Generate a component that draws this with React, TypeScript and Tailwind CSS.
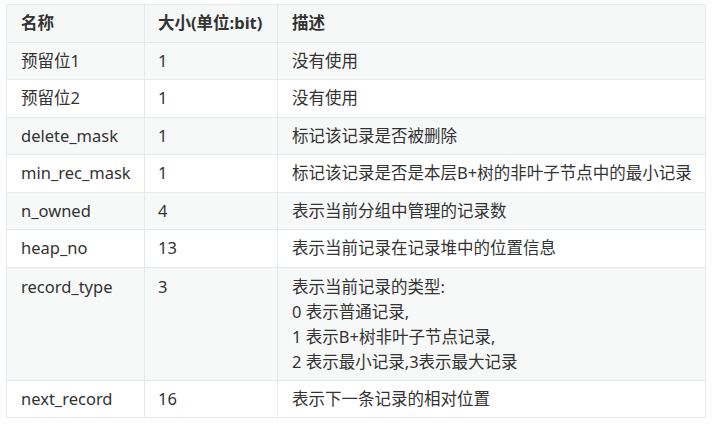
import React from "react";

const rows: [string, string, string[]][] = [
  ["预留位1", "1", ["没有使用"]],
  ["预留位2", "1", ["没有使用"]],
  ["delete_mask", "1", ["标记该记录是否被删除"]],
  ["min_rec_mask", "1", ["标记该记录是否是本层B+树的非叶子节点中的最小记录"]],
  ["n_owned", "4", ["表示当前分组中管理的记录数"]],
  ["heap_no", "13", ["表示当前记录在记录堆中的位置信息"]],
  [
    "record_type",
    "3",
    ["表示当前记录的类型:", "0 表示普通记录,", "1 表示B+树非叶子节点记录,", "2 表示最小记录,3表示最大记录"],
  ],
  ["next_record", "16", ["表示下一条记录的相对位置"]],
];

function Line({ children, multi }: { children: React.ReactNode; multi?: boolean }) {
  return (
    <div className={multi ? "h-[25px] leading-[25px] whitespace-nowrap" : "h-[24.5px] leading-[24.5px] whitespace-nowrap"}>
      {children}
    </div>
  );
}

export default function App() {
  return (
    <div
      className="w-[713px] h-[424px] bg-white pl-[6px] pt-[4px] text-[16.5px] text-[#333333]"
      style={{ fontFamily: '"Noto Sans", "Noto Sans CJK SC", sans-serif' }}
    >
      <table className="border-collapse w-[700px] table-fixed">
        <colgroup>
          <col className="w-[138px]" />
          <col className="w-[133px]" />
          <col />
        </colgroup>
        <thead>
          <tr className="bg-[#f6f8f8]">
            <th className="border border-[#e6e9ea] px-[14px] py-[6px] text-left font-bold align-top">
              <Line>名称</Line>
            </th>
            <th className="border border-[#e6e9ea] px-[13px] py-[6px] text-left font-bold align-top">
              <Line>大小(单位:bit)</Line>
            </th>
            <th className="border border-[#e6e9ea] px-[14px] py-[6px] text-left font-bold align-top">
              <Line>描述</Line>
            </th>
          </tr>
        </thead>
        <tbody>
          {rows.map((r, i) => {
            const multi = r[2].length > 1;
            return (
              <tr key={i} className={i % 2 === 0 ? "bg-[#f7f8f8]" : "bg-white"}>
                <td className="border border-[#e6e9ea] px-[14px] py-[6px] align-top">
                  <Line multi={multi}>{r[0]}</Line>
                </td>
                <td className="border border-[#e6e9ea] px-[13px] py-[6px] align-top">
                  <Line multi={multi}>{r[1]}</Line>
                </td>
                <td className="border border-[#e6e9ea] px-[14px] py-[6px] align-top">
                  {r[2].map((t, j) => (
                    <Line key={j} multi={multi}>
                      {t}
                    </Line>
                  ))}
                </td>
              </tr>
            );
          })}
        </tbody>
      </table>
    </div>
  );
}
